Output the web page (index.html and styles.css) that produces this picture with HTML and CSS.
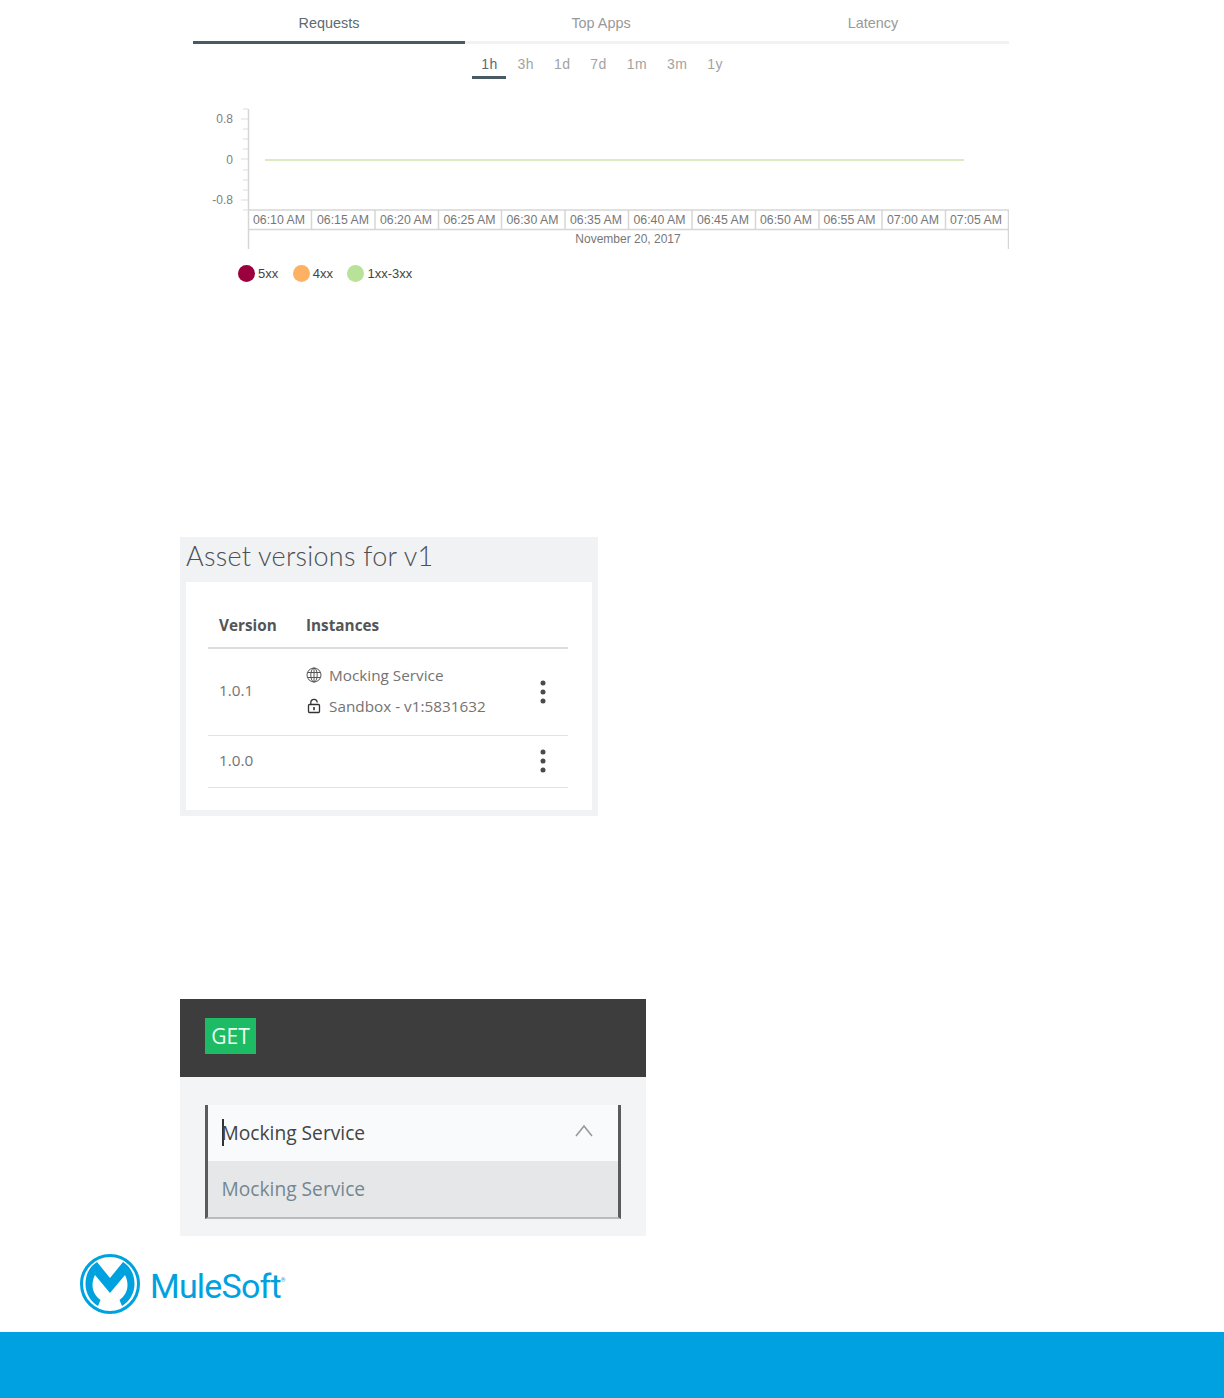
FILE: index.html
```html
<!DOCTYPE html>
<html lang="en">
<head>
  <meta charset="UTF-8">
  <title>API Manager</title>
  <link rel="stylesheet" href="styles.css">
</head>
<body>
  <div class="chart-block">
    <div class="tabs">
      <div class="tab active">Requests</div>
      <div class="tab">Top Apps</div>
      <div class="tab">Latency</div>
    </div>
    <div class="ranges">
      <span class="range active">1h</span>
      <span class="range">3h</span>
      <span class="range">1d</span>
      <span class="range">7d</span>
      <span class="range">1m</span>
      <span class="range">3m</span>
      <span class="range">1y</span>
    </div>
    <svg class="chart" viewBox="193 100 816 150" width="816" height="150">
      <path class="ticks" d="M248 109H243M248 119H241M248 129H243M248 139H243M248 149H243M248 159H241M248 170H243M248 180H243M248 190H243M248 200H241M248 210H243"/>
      <path class="axis" d="M248.500 109V249M248 210H1009M248 229.500H1009M1008.500 210V249M311.500 210V229M375 210V229M438.500 210V229M501.500 210V229M565 210V229M628.500 210V229M692 210V229M755.500 210V229M819 210V229M882 210V229M945.500 210V229"/>
      <path class="series" d="M265 160H964"/>
      <text class="y-label" x="233" y="123">0.8</text>
      <text class="y-label" x="233" y="164">0</text>
      <text class="y-label" x="233" y="204">-0.8</text>
      <text class="x-label" x="279" y="224">06:10 AM</text>
      <text class="x-label" x="343" y="224">06:15 AM</text>
      <text class="x-label" x="406" y="224">06:20 AM</text>
      <text class="x-label" x="469.500" y="224">06:25 AM</text>
      <text class="x-label" x="532.500" y="224">06:30 AM</text>
      <text class="x-label" x="596" y="224">06:35 AM</text>
      <text class="x-label" x="659.500" y="224">06:40 AM</text>
      <text class="x-label" x="723" y="224">06:45 AM</text>
      <text class="x-label" x="786" y="224">06:50 AM</text>
      <text class="x-label" x="849.500" y="224">06:55 AM</text>
      <text class="x-label" x="913" y="224">07:00 AM</text>
      <text class="x-label" x="976" y="224">07:05 AM</text>
      <text class="date-label" x="628" y="243">November 20, 2017</text>
    </svg>
    <div class="legend">
      <div class="legend-item"><span class="dot dot-5xx"></span>5xx</div>
      <div class="legend-item"><span class="dot dot-4xx"></span>4xx</div>
      <div class="legend-item"><span class="dot dot-ok"></span>1xx-3xx</div>
    </div>
  </div>

  <div class="versions">
    <h2 class="versions-title">Asset versions for v1</h2>
    <div class="versions-card">
      <table class="versions-table">
        <thead>
          <tr><th class="col-version">Version</th><th>Instances</th><th class="col-menu"></th></tr>
        </thead>
        <tbody>
          <tr class="row-tall">
            <td>1.0.1</td>
            <td>
              <div class="instance">
                <svg class="icon" viewBox="0 0 16 16" width="16" height="16"><g fill="none" stroke="#555" stroke-width="1"><circle cx="8" cy="8" r="7"/><ellipse cx="8" cy="8" rx="3.200" ry="7"/><path d="M8 1V15M1.500 5.500H14.500M1.500 10.500H14.500"/></g></svg>
                Mocking Service
              </div>
              <div class="instance">
                <svg class="icon" viewBox="0 0 16 16" width="16" height="16"><g fill="none" stroke="#333" stroke-width="1.300"><rect x="2.500" y="6.500" width="11" height="8" rx="1"/><path d="M4.800 6.500V4.500A3.200 3.200 0 0 1 11.200 4.500"/></g><rect x="7.200" y="9" width="1.600" height="3.200" fill="#333"/></svg>
                Sandbox - v1:5831632
              </div>
            </td>
            <td class="col-menu">
              <svg viewBox="0 0 6 24" width="6" height="24"><g fill="#4a4a4a"><circle cx="3" cy="3" r="2.500"/><circle cx="3" cy="12" r="2.500"/><circle cx="3" cy="21" r="2.500"/></g></svg>
            </td>
          </tr>
          <tr class="row-short">
            <td>1.0.0</td>
            <td></td>
            <td class="col-menu">
              <svg viewBox="0 0 6 24" width="6" height="24"><g fill="#4a4a4a"><circle cx="3" cy="3" r="2.500"/><circle cx="3" cy="12" r="2.500"/><circle cx="3" cy="21" r="2.500"/></g></svg>
            </td>
          </tr>
        </tbody>
      </table>
    </div>
  </div>

  <div class="method">
    <div class="method-head"><span class="badge">GET</span></div>
    <div class="method-body">
      <div class="select">
        <div class="select-value">
          <span class="caret"></span>Mocking Service
          <svg class="chevron" viewBox="0 0 18 13" width="18" height="13"><path d="M1 12L9 2L17 12" fill="none" stroke="#999" stroke-width="1.600"/></svg>
        </div>
        <div class="select-option">Mocking Service</div>
      </div>
    </div>
  </div>

  <div class="brand">
    <svg class="brand-mark" viewBox="0 0 60 60" width="60" height="60">
      <circle cx="30" cy="30" r="28.500" fill="none" stroke="#00a1df" stroke-width="3"/>
      <path fill="#00a1df" d="M17 8L30 24L43 8C50 12 54.500 20 54.500 30C54.500 39 50 47 42 52L39.500 46C44.500 42.500 47.500 37 47.500 31C47.500 27 46.500 24 45 21L30 39L15 21C13.500 24 12.500 27 12.500 31C12.500 37 15.500 42.500 20.500 46L18 52C10 47 5.500 39 5.500 30C5.500 20 10 12 17 8Z"/>
    </svg>
    <span class="brand-name">MuleSoft<sup class="brand-reg">®</sup></span>
  </div>

  <div class="footer-bar"></div>
</body>
</html>
```

FILE: styles.css
```css
body {
  margin: 0;
  background: #fff;
  font-family: "Open Sans", sans-serif;
  color: #666;
}

/* chart */
.chart-block {
  width: 816px;
  margin-left: 193px;
  font-family: "Liberation Sans", Arial, sans-serif;
}
.tabs {
  display: flex;
  height: 44px;
}
.tab {
  flex: 1;
  padding-top: 15px;
  box-sizing: border-box;
  border-bottom: 3px solid #f2f2f2;
  text-align: center;
  font-size: 14.400px;
  line-height: 17px;
  color: #999;
}
.tab.active {
  color: #5b6b73;
  border-bottom-color: #485b63;
}
.ranges {
  display: flex;
  justify-content: center;
  gap: 2px;
  height: 36px;
  padding-left: 2px;
}
.range {
  height: 25px;
  margin-top: 10px;
  padding: 0 9px;
  font-size: 14px;
  line-height: 21px;
  letter-spacing: 0.4px;
  color: #a3a3a3;
}
.range.active {
  padding-right: 8px;
  margin-right: 1px;
  color: #5b6b73;
  box-sizing: border-box;
  border-bottom: 3px solid #485b63;
}
.chart {
  display: block;
  margin-top: 20px;
}
.ticks {
  fill: none;
  stroke: #ddd;
}
.axis {
  fill: none;
  stroke: #d6d6d6;
  stroke-width: 1.500;
}
.series {
  fill: none;
  stroke: #cfe3ad;
  stroke-width: 1.500;
}
.y-label {
  font-size: 12px;
  fill: #808080;
  text-anchor: end;
}
.x-label {
  font-size: 12.300px;
  fill: #777;
  text-anchor: middle;
}
.date-label {
  font-size: 12px;
  fill: #777;
  text-anchor: middle;
}
.legend {
  display: flex;
  gap: 14.500px;
  margin: 14px 0 0 45px;
  font-size: 13px;
  color: #444;
}
.legend-item {
  display: flex;
  align-items: center;
  gap: 3px;
  height: 18px;
}
.dot {
  width: 17px;
  height: 17px;
  border-radius: 50%;
}
.dot-5xx { background: #99003d; }
.dot-4xx { background: #ffb163; }
.dot-ok { background: #b8e297; }

/* versions */
.versions {
  width: 418px;
  height: 279px;
  box-sizing: border-box;
  margin: 255px 0 0 180px;
  padding: 0 6px 6px;
  background: #f1f2f4;
  display: flex;
  flex-direction: column;
}
.versions-title {
  margin: 0;
  height: 45px;
  font-family: Lato, sans-serif;
  font-weight: 300;
  font-size: 27px;
  line-height: 38px;
  letter-spacing: 0.250px;
  color: #4c5052;
}
.versions-card {
  flex: 1;
  background: #fff;
  padding: 22px;
}
.versions-table {
  width: 360px;
  table-layout: fixed;
  border-collapse: collapse;
  font-size: 15.300px;
  color: #737373;
}
.versions-table th {
  height: 44px;
  padding: 0 0 2px;
  box-sizing: border-box;
  text-align: left;
  font-weight: 700;
  color: #555;
  border-bottom: 2px solid #ddd;
}
.versions-table td {
  padding: 0 0 3px;
  border-bottom: 1px solid #e3e3e3;
}
.versions-table th.col-version {
  width: 98px;
  box-sizing: border-box;
}
.versions-table th.col-version,
.versions-table td:first-child {
  padding-left: 11px;
}
.versions-table .col-menu {
  width: 28px;
}
.versions-table td.col-menu {
  padding: 0;
}
.col-menu svg {
  display: block;
}
.row-tall {
  height: 87px;
}
.row-short {
  height: 52px;
}
.instance {
  display: flex;
  align-items: center;
  gap: 7px;
  height: 31px;
}
.icon {
  flex: none;
}

/* method */
.method {
  width: 466px;
  height: 237px;
  margin: 183px 0 0 180px;
  background: #f3f4f6;
}
.method-head {
  height: 78px;
  box-sizing: border-box;
  padding: 19px 25px;
  background: #3c3d3c;
}
.badge {
  display: block;
  width: 51px;
  height: 36px;
  background: #1dbb63;
  color: #eafff2;
  font-size: 21px;
  line-height: 36px;
  text-align: center;
}
.method-body {
  padding: 28px 25px 0;
}
.select {
  width: 416px;
  box-sizing: border-box;
  border-left: 3px solid #5b5b5b;
  border-right: 3px solid #5b5b5b;
  border-bottom: 2px solid #b9bbbd;
  font-size: 19.200px;
}
.select-value {
  display: flex;
  align-items: center;
  height: 54px;
  padding: 0 25px 2px 13.500px;
  background: #f9fafc;
  color: #444;
}
.caret {
  width: 2px;
  height: 27px;
  margin-right: -2px;
  background: #333;
}
.chevron {
  margin-left: auto;
  margin-bottom: 3px;
}
.select-option {
  height: 56px;
  padding-left: 13.500px;
  line-height: 55px;
  background: #e6e7e9;
  color: #748791;
}

/* logo + footer */
.brand {
  display: flex;
  align-items: center;
  gap: 10px;
  margin: 18px 0 0 80px;
  height: 60px;
}
.brand-mark {
  flex: none;
}
.brand-name {
  margin-top: 3px;
  font-family: Roboto, sans-serif;
  font-size: 34px;
  font-weight: 400;
  letter-spacing: -0.800px;
  color: #00a1df;
}
.brand-reg {
  font-size: 6px;
  vertical-align: 16px;
  line-height: 0;
}
.footer-bar {
  height: 66px;
  margin-top: 18px;
  background: #00a1e0;
}
```
